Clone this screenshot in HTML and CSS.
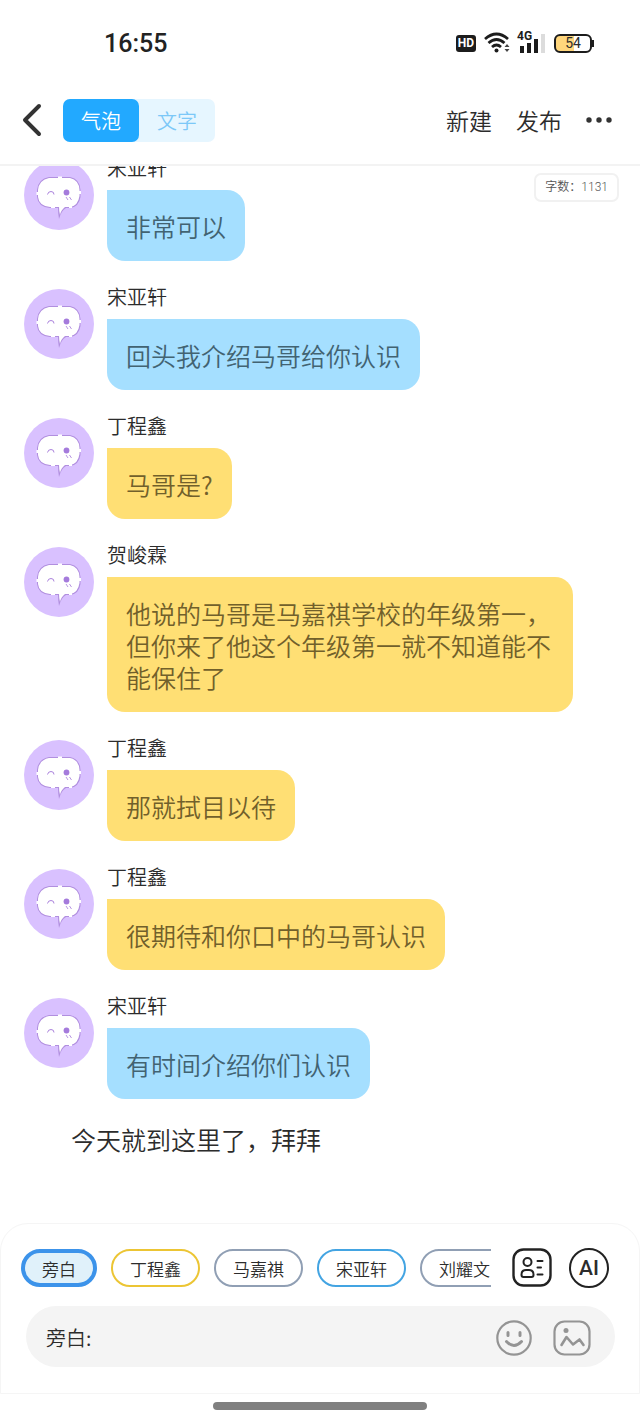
FILE: index.html
```html
<!DOCTYPE html>
<html lang="zh-CN">
<head>
<meta charset="utf-8">
<meta name="viewport" content="width=device-width, initial-scale=1">
<title>气泡</title>
<link rel="stylesheet" href="styles.css">
</head>
<body>
<svg class="defs" aria-hidden="true">
  <symbol id="face" viewBox="0 0 70 70">
    <path d="M25 17H46Q56 19 56.500 30V37Q55 47 46 48H42Q37 51 35 59Q34 53 34 48H26Q14 47 13 37V30Q14 19 25 17Z" fill="#b18fdf"/>
    <path d="M25 18H46Q55 20 55.500 30V36Q54 46 46 47H41Q37 50 36 55Q35 51 35 47H26Q15 46 14 37V30Q15 20 25 18Z" fill="#fff"/>
    <path d="M34 16.500h4v2h-4zM12.500 32h2v3h-2zM55 31h2v3h-2zM27 46h4v2h-4zM45 46h3v2h-3z" fill="#fff"/>
    <path d="M23.500 34.500Q24 31.500 27 31.500T30 34.500" fill="none" stroke="#aa82dc" stroke-width="1"/>
    <circle cx="42.500" cy="32.500" r="2.900" fill="#a57bdc"/>
    <path d="M42 37l2 3M45.500 37l2 3" fill="none" stroke="#b795e2" stroke-width="1"/>
  </symbol>
</svg>

<div class="statusbar">
  <time class="clock">16:55</time>
  <div class="status-icons">
    <span class="hd">HD</span>
    <svg class="wifi" width="27" height="22" viewBox="0 0 27 22" fill="none" stroke="#1c1c1c" stroke-width="2.800">
      <path d="M1 7Q12.500-3 24 7M4.500 11Q12.500 4 20.500 11M8 15Q12.500 11 17 15"/>
      <circle cx="12.500" cy="18.500" r="2" fill="#1c1c1c" stroke="none"/>
      <path d="M20.500 15l2.500-3 2.500 3zM20.500 17l2.500 3 2.500-3z" fill="#444" stroke="none"/>
    </svg>
    <div class="signal">
      <span class="net">4G</span>
      <svg width="26" height="20" viewBox="0 0 26 20" fill="#1c1c1c">
        <rect x="1" y="13" width="4" height="7"/><rect x="8" y="10" width="4" height="10"/>
        <rect x="15" y="6" width="4" height="14"/><rect x="22" y="1" width="4" height="19" fill="#dcdcdc"/>
      </svg>
    </div>
    <span class="battery">54</span>
  </div>
</div>

<header class="topbar">
  <button class="back" aria-label="返回">
    <svg width="20" height="34" viewBox="0 0 20 34" fill="none" stroke="#333" stroke-width="4" stroke-linecap="round" stroke-linejoin="round"><path d="M17 3L3 17L17 31"/></svg>
  </button>
  <div class="tabs">
    <button class="tab tab-active">气泡</button>
    <button class="tab">文字</button>
  </div>
  <nav class="actions">
    <button class="action">新建</button>
    <button class="action">发布</button>
    <button class="more" aria-label="更多"><svg width="26" height="8" viewBox="0 0 26 8" fill="#333"><circle cx="3" cy="4" r="2.700"/><circle cx="13" cy="4" r="2.700"/><circle cx="23" cy="4" r="2.700"/></svg></button>
  </nav>
</header>

<main class="chat">
  <div class="word-count">字数：1131</div>
  <article class="message">
    <svg class="avatar"><use href="#face"/></svg>
    <div class="content"><div class="name">宋亚轩</div><p class="bubble blue">非常可以</p></div>
  </article>
  <article class="message">
    <svg class="avatar"><use href="#face"/></svg>
    <div class="content"><div class="name">宋亚轩</div><p class="bubble blue">回头我介绍马哥给你认识</p></div>
  </article>
  <article class="message">
    <svg class="avatar"><use href="#face"/></svg>
    <div class="content"><div class="name">丁程鑫</div><p class="bubble yellow">马哥是?</p></div>
  </article>
  <article class="message">
    <svg class="avatar"><use href="#face"/></svg>
    <div class="content"><div class="name">贺峻霖</div><p class="bubble yellow">他说的马哥是马嘉祺学校的年级第一，但你来了他这个年级第一就不知道能不能保住了</p></div>
  </article>
  <article class="message">
    <svg class="avatar"><use href="#face"/></svg>
    <div class="content"><div class="name">丁程鑫</div><p class="bubble yellow">那就拭目以待</p></div>
  </article>
  <article class="message">
    <svg class="avatar"><use href="#face"/></svg>
    <div class="content"><div class="name">丁程鑫</div><p class="bubble yellow">很期待和你口中的马哥认识</p></div>
  </article>
  <article class="message">
    <svg class="avatar"><use href="#face"/></svg>
    <div class="content"><div class="name">宋亚轩</div><p class="bubble blue">有时间介绍你们认识</p></div>
  </article>
  <p class="narration">今天就到这里了，拜拜</p>
</main>

<footer class="composer">
  <div class="roles">
    <div class="chips">
      <button class="chip chip-active">旁白</button>
      <button class="chip chip-yellow">丁程鑫</button>
      <button class="chip">马嘉祺</button>
      <button class="chip chip-blue">宋亚轩</button>
      <button class="chip">刘耀文</button>
    </div>
    <button class="tool" aria-label="角色">
      <svg width="40" height="40" viewBox="0 0 40 40" fill="none" stroke="#222" stroke-width="2">
        <rect x="1.500" y="1.500" width="37" height="36" rx="10" stroke-width="2.400"/>
        <circle cx="15.500" cy="14" r="4"/>
        <path d="M14 22H17Q21.500 22 21.500 26.500V27Q21.500 29 19.500 29H11.500Q9.500 29 9.500 27V26.500Q9.500 22 14 22Z"/>
        <path d="M25.500 13h5M25.500 19.500h3.500M25.500 26.500h5" stroke-linecap="round"/>
      </svg>
    </button>
    <button class="tool ai">AI</button>
  </div>
  <div class="entry">
    <input class="field" type="text" value="旁白:" aria-label="旁白">
    <button class="tool" aria-label="表情">
      <svg width="36" height="36" viewBox="0 0 36 36" fill="none" stroke="#949494" stroke-width="2.200" stroke-linecap="round">
        <circle cx="18" cy="18" r="16.700"/>
        <path d="M12 12.500v3M24 12.500v3" stroke-width="3"/>
        <path d="M10.500 21.500Q18 29.500 25.500 21.500" stroke-width="3"/>
      </svg>
    </button>
    <button class="tool" aria-label="图片">
      <svg width="38" height="36" viewBox="0 0 38 36" fill="none" stroke="#949494" stroke-width="2.200" stroke-linecap="round" stroke-linejoin="round">
        <rect x="1.500" y="1.500" width="35" height="33" rx="10"/>
        <circle cx="13" cy="10.500" r="2.500" fill="#949494" stroke="none"/>
        <path d="M8.500 25L13.500 17L20 24.500L26.500 19.500L30.500 25" stroke-width="2.600"/>
      </svg>
    </button>
  </div>
</footer>
<div class="gesture"></div>
</body>
</html>
```
FILE: styles.css
```css
* { box-sizing: border-box; }
body {
  margin: 0;
  height: 100vh;
  display: flex;
  flex-direction: column;
  background: #fff;
  color: #2c2c2c;
  font-family: "Noto Sans CJK SC", sans-serif;
  font-weight: 350;
}
p { margin: 0; }
button {
  padding: 0;
  border: 0;
  background: none;
  color: inherit;
  font: inherit;
}
svg { display: block; }
.defs { position: absolute; width: 0; height: 0; }

.statusbar {
  display: flex;
  justify-content: space-between;
  align-items: center;
  height: 78px;
  padding: 8px 46px 0 104px;
  flex: none;
}
.clock { font: 500 25px Roboto, sans-serif; color: #222; }
.status-icons { display: flex; align-items: center; gap: 8px; }
.hd {
  width: 20px;
  height: 17px;
  border-radius: 3px;
  background: #1c1c1c;
  color: #fff;
  font: 700 12px/17px Roboto, sans-serif;
  text-align: center;
}
.wifi { margin-right: -2px; }
.signal { position: relative; display: flex; width: 28px; justify-content: flex-end; }
.net {
  position: absolute;
  left: 0;
  top: -3px;
  font: 700 12px/12px Roboto, sans-serif;
  color: #1c1c1c;
}
.battery {
  position: relative;
  width: 38px;
  height: 19px;
  margin: 0 2px 0 1px;
  border: 2px solid #1c1c1c;
  border-radius: 6px;
  background: linear-gradient(90deg, #ffd67c 52%, #fff 52%);
  font: 400 14px/15px Roboto, sans-serif;
  text-align: center;
}
.battery::after {
  content: "";
  position: absolute;
  right: -4px;
  top: 4px;
  width: 2px;
  height: 7px;
  background: #1c1c1c;
}

.topbar {
  display: flex;
  align-items: center;
  height: 88px;
  padding: 0 28px 2px 22px;
  border-bottom: 2px solid #f3f3f3;
  flex: none;
}
.tabs {
  display: flex;
  margin-left: 21px;
  border-radius: 7px;
  background: #e6f6ff;
}
.tab {
  width: 76px;
  height: 43px;
  border-radius: 7px;
  color: #7cc8f8;
  font-size: 20px;
}
.tab-active { background: #22a9ff; color: #fff; }
.actions { display: flex; align-items: center; gap: 24px; margin-left: auto; }
.action { font-size: 23px; line-height: 32px; }

.chat {
  position: relative;
  flex: 1 1 0;
  min-height: 0;
  overflow: hidden;
  display: flex;
  flex-direction: column;
  justify-content: flex-end;
  gap: 21px;
  padding: 0 24px 64px;
}
.word-count {
  position: absolute;
  top: 7px;
  right: 21px;
  padding: 0 9px;
  border: 2px solid #f1f1f1;
  border-radius: 7px;
  background: #fff;
  color: #555;
  font-family: Roboto, "Noto Sans CJK SC", sans-serif;
  font-size: 12px;
  line-height: 25px;
}
.message { display: flex; gap: 13px; flex: none; }
.avatar {
  flex: none;
  width: 70px;
  height: 70px;
  margin-top: 7px;
  border-radius: 50%;
  background: #d9c1ff;
}
.content { display: flex; flex-direction: column; align-items: flex-start; }
.name { margin-bottom: 8px; font-size: 20px; line-height: 29px; }
.bubble {
  max-width: 466px;
  padding: 20px 19px 19px;
  border-radius: 0 18px 18px 18px;
  font-size: 25px;
  line-height: 32px;
}
.blue { background: #a5dfff; color: #426372; }
.yellow { background: #ffdf74; color: #71602b; }
.narration {
  flex: none;
  padding-left: 47px;
  font-size: 25px;
  line-height: 39px;
}

.composer {
  flex: none;
  height: 171px;
  padding: 24px 24px 0 20px;
  border: 1px solid #f5f5f5;
  border-radius: 28px 28px 0 0;
}
.roles { display: flex; align-items: center; }
.chips {
  display: flex;
  flex: 1 1 0;
  min-width: 0;
  overflow: hidden;
  gap: 14px;
  margin-right: 21px;
}
.chip {
  flex: none;
  width: 89px;
  height: 38px;
  border: 2px solid #909fb4;
  border-radius: 19px;
  font-size: 17px;
}
.chip-active { width: 76px; border: 4px solid #3c93ea; background: #e0f1fa; }
.chip-yellow { border-color: #ecc534; }
.chip-blue { border-color: #43a4e2; }
.tool { flex: none; }
.ai {
  width: 40px;
  height: 40px;
  margin: 0 6px 0 17px;
  border: 2px solid #222;
  border-radius: 50%;
  font: 500 21px/36px Roboto, sans-serif;
}
.entry {
  display: flex;
  align-items: center;
  gap: 21px;
  height: 61px;
  margin: 18px 0 0 5px;
  padding: 2px 24px 0 20px;
  border-radius: 31px;
  background: #f4f4f4;
}
.field {
  flex: 1;
  min-width: 0;
  padding: 0;
  border: 0;
  outline: 0;
  background: none;
  color: #2c2c2c;
  font: inherit;
  font-size: 20px;
}
.gesture {
  flex: none;
  width: 33.4%;
  height: 8px;
  margin: 8px auto 12px;
  border-radius: 4px;
  background: #808080;
}
```
